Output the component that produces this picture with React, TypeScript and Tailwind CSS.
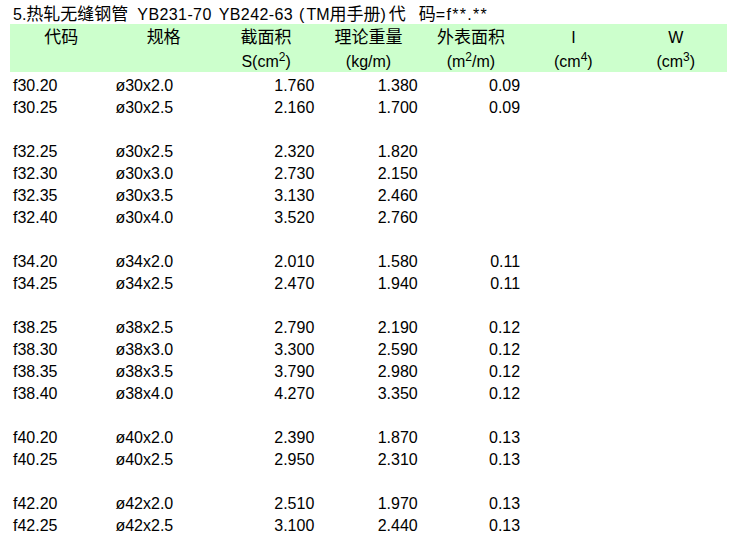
import React from "react";

type Row = [string, string, string, string, string] | null;

const rows: Row[] = [
  ["f30.20", "ø30x2.0", "1.760", "1.380", "0.09"],
  ["f30.25", "ø30x2.5", "2.160", "1.700", "0.09"],
  null,
  ["f32.25", "ø30x2.5", "2.320", "1.820", ""],
  ["f32.30", "ø30x3.0", "2.730", "2.150", ""],
  ["f32.35", "ø30x3.5", "3.130", "2.460", ""],
  ["f32.40", "ø30x4.0", "3.520", "2.760", ""],
  null,
  ["f34.20", "ø34x2.0", "2.010", "1.580", "0.11"],
  ["f34.25", "ø34x2.5", "2.470", "1.940", "0.11"],
  null,
  ["f38.25", "ø38x2.5", "2.790", "2.190", "0.12"],
  ["f38.30", "ø38x3.0", "3.300", "2.590", "0.12"],
  ["f38.35", "ø38x3.5", "3.790", "2.980", "0.12"],
  ["f38.40", "ø38x4.0", "4.270", "3.350", "0.12"],
  null,
  ["f40.20", "ø40x2.0", "2.390", "1.870", "0.13"],
  ["f40.25", "ø40x2.5", "2.950", "2.310", "0.13"],
  null,
  ["f42.20", "ø42x2.0", "2.510", "1.970", "0.13"],
  ["f42.25", "ø42x2.5", "3.100", "2.440", "0.13"],
];

const font = {
  fontFamily: '"Liberation Sans", "Noto Sans CJK SC", sans-serif',
};

function C({ children, className = "" }: { children: React.ReactNode; className?: string }) {
  return <span className={"text-[17px] " + className}>{children}</span>;
}

export default function App() {
  return (
    <div
      className="w-[753px] h-[554px] bg-white text-black text-[16px] pl-[10px] overflow-hidden"
      style={font}
    >
      <div className="h-6 pt-[5px] pl-[3px] leading-[20px] whitespace-nowrap">
        <span>5.</span>
        <C>热轧无缝钢管</C>
        <span className="ml-[9px] tracking-[0.4px]">YB231-70</span>
        <span className="ml-[7px] tracking-[0.4px]">YB242-63</span>
        <span className="ml-[6px]">(</span>
        <span className="ml-[2px]">TM</span>
        <C>用手册</C>
        <span>)</span>
        <C className="ml-[3px]">代</C>
        <C className="ml-[13px]">码</C>
        <span className="tracking-[1.3px]">=f**.**</span>
      </div>
      <div className="w-[717px] bg-[#ccffcc]">
        <div className="grid grid-cols-7 h-6 pt-[4px] text-center leading-[20px] text-[17px]">
          <div>代码</div>
          <div>规格</div>
          <div>截面积</div>
          <div>理论重量</div>
          <div>外表面积</div>
          <div className="text-[16px]">I</div>
          <div className="text-[16px]">W</div>
        </div>
        <div className="grid grid-cols-7 h-6 pt-[4px] text-center leading-[20px]">
          <div></div>
          <div></div>
          <div>
            S(cm<sup>2</sup>)
          </div>
          <div>(kg/m)</div>
          <div>
            (m<sup>2</sup>/m)
          </div>
          <div>
            (cm<sup>4</sup>)
          </div>
          <div>
            (cm<sup>3</sup>)
          </div>
        </div>
      </div>
      <div className="w-[717px] mt-[3px]">
        {rows.map((r, i) =>
          r ? (
            <div key={i} className="grid grid-cols-7 h-[22px] leading-[22px]">
              <div className="pl-[3px]">{r[0]}</div>
              <div className="pl-[3px]">{r[1]}</div>
              <div className="text-right pr-[3px]">{r[2]}</div>
              <div className="text-right pr-[2px]">{r[3]}</div>
              <div className="text-right pr-[2px]">{r[4]}</div>
              <div></div>
              <div></div>
            </div>
          ) : (
            <div key={i} className="h-[22px]" />
          )
        )}
      </div>
    </div>
  );
}
